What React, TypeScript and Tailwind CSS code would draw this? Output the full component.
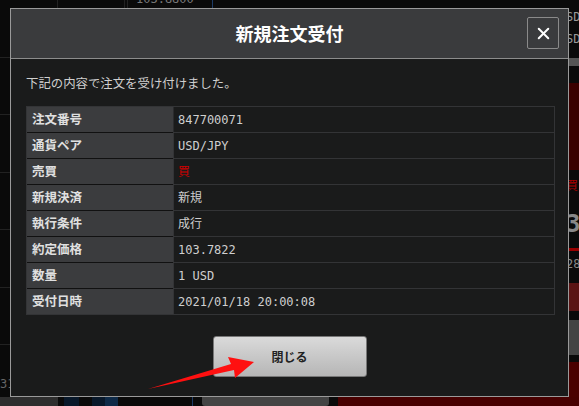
import { X } from "lucide-react";

const rows: { label: string; value: string; red?: boolean }[] = [
  { label: "注文番号", value: "847700071" },
  { label: "通貨ペア", value: "USD/JPY" },
  { label: "売買", value: "買", red: true },
  { label: "新規決済", value: "新規" },
  { label: "執行条件", value: "成行" },
  { label: "約定価格", value: "103.7822" },
  { label: "数量", value: "1 USD" },
  { label: "受付日時", value: "2021/01/18 20:00:08" },
];

const jp = { fontFamily: '"Noto Sans CJK JP", "Noto Sans", sans-serif' };
const mono = {
  fontFamily: '"DejaVu Sans Mono", "Noto Sans CJK JP", monospace',
};

const Background = () => (
  <div className="flex h-full w-full flex-col">
    <div className="flex flex-1">
      {/* left chart column */}
      <div className="flex w-[58px] flex-col border-r border-[#222]">
        {[0, 1, 2, 3, 4, 5].map((i) => (
          <div key={i} className="h-[57.5px] border-b border-[#222]" />
        ))}
        <div className="flex flex-1 items-end pb-[4px]">
          <span className="text-[12px] text-[#666]" style={mono}>
            31
          </span>
        </div>
      </div>
      {/* center area */}
      <div className="flex flex-1 flex-col">
        <div className="flex h-[8px]">
          <div className="w-[67px] border-r border-[#222]" />
          <div className="w-[3px] border-r border-[#222]" />
          <div className="w-[85px] overflow-hidden border-r border-[#1d3b66] pl-[8px]">
            <div className="-mt-[8px] text-[12px] leading-[14px] text-[#777]" style={mono}>
              103.8800
            </div>
          </div>
        </div>
      </div>
      {/* right column */}
      <div className="flex w-[13px] flex-col text-[12px] text-[#999]" style={mono}>
        <div className="h-[58px] pt-[6px] leading-[22px]">
          <div>SD</div>
          <div>SD</div>
        </div>
        <div className="h-[8px] bg-[#555]" />
        <div className="h-[17px]" />
        <div className="h-[87px] bg-[#3a0000]" />
        <div className="h-[30px] pt-[6px] text-[#a00]" style={jp}>
          買
        </div>
        <div className="h-[48px] pt-[6px] text-[24px] font-bold text-[#888]">3</div>
        <div className="h-[3px] bg-[#9a0000]" />
        <div className="h-[32px] pt-[4px] text-[#888]">28</div>
        <div className="h-[28px] bg-[#5a1414]" />
        <div className="h-[9px]" />
        <div className="h-[35px] bg-[#444]" />
        <div className="h-[7px]" />
        <div className="flex-1 bg-[#4a0000]" />
      </div>
    </div>
    {/* bottom strip */}
    <div className="flex h-[9px]">
      <div className="w-[58px] bg-[#2e2e2e]" />
      <div className="w-[6px]" />
      <div className="w-[15px] bg-[#08182a]" />
      <div className="w-[13px]" />
      <div className="w-[13px] bg-[#08182a]" />
      <div className="w-[13px] bg-[#0e2a48]" />
      <div className="w-[75px] border-r border-[#1d3b66]" />
      <div className="w-[9px]" />
      <div className="w-[127px] rounded-b-[3px] bg-[#444]" />
      <div className="w-[9px]" />
      <div className="flex-1 bg-[#480000]" />
    </div>
  </div>
);

const App = () => {
  return (
    <div className="relative h-[406px] w-full overflow-hidden bg-[#0a0a0a]" style={jp}>
      <Background />

      {/* Modal */}
      <div className="absolute left-[10px] top-[8px] flex h-[389px] w-[559px] flex-col border border-[#9a9a9a] bg-[#1a1b1b]">
        {/* Header */}
        <div className="relative flex h-[50px] items-center justify-center border-b border-[#8c8c8c] bg-[#3a3b3d]">
          <h1 className="text-[18px] font-bold text-white">新規注文受付</h1>
          <button className="absolute right-[9px] top-[8px] flex h-[32px] w-[32px] items-center justify-center rounded-[2px] border border-[#8a8a8a]">
            <X className="h-[19px] w-[19px] text-white" strokeWidth={2.5} />
          </button>
        </div>

        {/* Body */}
        <div className="flex flex-1 flex-col pl-[15px] pr-[13px] pt-[15px]">
          <p className="mb-[14px] h-[18px] text-[12.4px] leading-[18px] text-[#cfcfcf]">
            下記の内容で注文を受け付けました。
          </p>

          <div className="border border-[#333436]">
            {rows.map((row, i) => (
              <div key={row.label} className="flex">
                <div
                  className={
                    i === 0
                      ? "flex h-[25px] w-[146px] items-center bg-[#3b3c3e] pl-[5px] text-[12.5px] font-bold text-[#e0e0e0]"
                      : "flex h-[26px] w-[146px] items-center border-t border-[#111] bg-[#3b3c3e] pl-[5px] text-[12.5px] font-bold text-[#e0e0e0]"
                  }
                >
                  {row.label}
                </div>
                <div
                  className={
                    i === 0
                      ? "flex h-[25px] flex-1 items-center border-l border-[#2a2b2d] pl-[4px] text-[12px]"
                      : "flex h-[26px] flex-1 items-center border-l border-t border-[#333436] pl-[4px] text-[12px]"
                  }
                  style={mono}
                >
                  <span className={row.red ? "text-[#d10000]" : "text-[#cfcfcf]"}>
                    {row.value}
                  </span>
                </div>
              </div>
            ))}
          </div>

          <div className="mt-[21px] flex justify-center pr-[2px]">
            <button className="flex h-[41px] w-[154px] items-center justify-center rounded-[3px] border border-[#777] bg-gradient-to-b from-[#dadada] to-[#b6b6b6] text-[12px] font-bold text-[#222]">
              閉じる
            </button>
          </div>
        </div>
      </div>

      {/* annotation arrow */}
      <svg
        className="pointer-events-none absolute left-0 top-0"
        width="579"
        height="406"
        viewBox="0 0 579 406"
      >
        <polygon
          points="148,389 231,364 228,357 254,362 235,378 234,370"
          fill="#ff1010"
        />
      </svg>
    </div>
  );
};

export default App;
